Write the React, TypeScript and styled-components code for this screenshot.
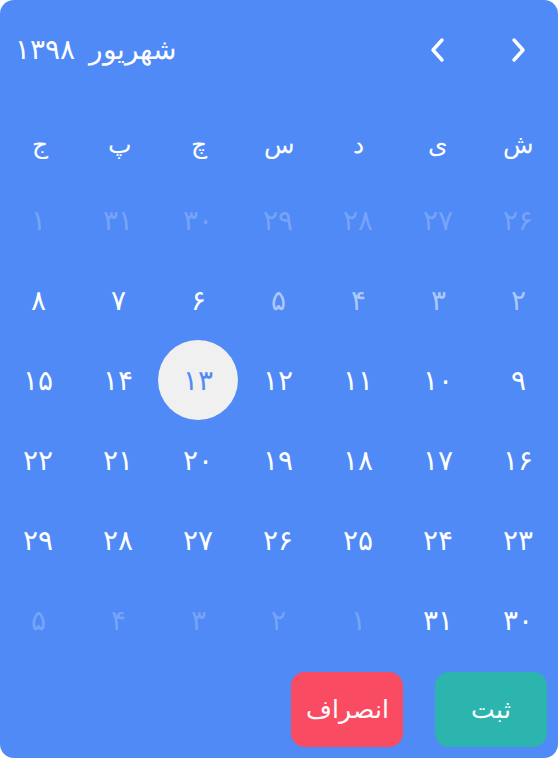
import React from "react";
import styled, { createGlobalStyle } from "styled-components";

const Global = createGlobalStyle`
  html, body { margin: 0; padding: 0; background: #ffffff; }
  body { font-family: "DejaVu Sans", sans-serif; }
`;

const Card = styled.div`
  box-sizing: border-box;
  width: 558px;
  height: 758px;
  background: #508af7;
  border-radius: 14px;
  direction: rtl;
  display: flex;
  flex-direction: column;
  color: #ffffff;
  font-family: "DejaVu Sans", sans-serif;
  overflow: hidden;
`;

const Header = styled.div`
  height: 100px;
  display: flex;
  align-items: center;
`;

const NavButton = styled.button`
  width: 80px;
  height: 60px;
  border: 0;
  background: transparent;
  display: flex;
  align-items: center;
  justify-content: center;
  padding: 0;
  cursor: pointer;
`;

const Title = styled.div`
  margin-right: auto;
  padding-left: 15px;
  display: flex;
  gap: 14px;
  font-size: 28px;
  font-weight: 300;
  line-height: 1;
  white-space: nowrap;
`;

const Grid = styled.div`
  display: grid;
  grid-template-columns: repeat(7, 1fr);
`;

const WeekDay = styled.div`
  height: 80px;
  padding-top: 8px;
  box-sizing: border-box;
  display: flex;
  align-items: center;
  justify-content: center;
  font-size: 25px;
  font-weight: 300;
`;

const Cell = styled.div`
  height: 80px;
  display: flex;
  align-items: center;
  justify-content: center;
`;

const Day = styled.div<{ $tone: "faint" | "dim" | "normal"; $selected?: boolean }>`
  width: 80px;
  height: 80px;
  border-radius: 50%;
  display: flex;
  align-items: center;
  justify-content: center;
  font-size: 28px;
  font-weight: 300;
  background: ${(p) => (p.$selected ? "#f0f0f0" : "transparent")};
  color: ${(p) =>
    p.$selected
      ? "#508af7"
      : p.$tone === "faint"
      ? "rgba(255,255,255,0.24)"
      : p.$tone === "dim"
      ? "rgba(255,255,255,0.55)"
      : "#ffffff"};
`;

const Footer = styled.div`
  flex: 1;
  display: flex;
  align-items: flex-start;
  gap: 32px;
  padding: 12px 11px 0 0;
`;

const ActionButton = styled.button<{ $variant: "ok" | "cancel" }>`
  width: 112px;
  height: 75px;
  border: 0;
  border-radius: 14px;
  color: #ffffff;
  font-family: "DejaVu Sans", sans-serif;
  font-size: 25px;
  font-weight: 300;
  background: ${(p) => (p.$variant === "ok" ? "#2cb5ae" : "#f94c63")};
  cursor: pointer;
`;

const fa = (n: number) =>
  String(n).replace(/\d/g, (d) => "۰۱۲۳۴۵۶۷۸۹"[Number(d)]);

const Chevron = ({ dir }: { dir: "left" | "right" }) => (
  <svg width="18" height="26" viewBox="0 0 18 26" fill="none">
    <path
      d={dir === "left" ? "M13 3 L4 13 L13 23" : "M5 3 L14 13 L5 23"}
      stroke="#ffffff"
      strokeWidth="3.4"
      strokeLinecap="round"
      strokeLinejoin="round"
    />
  </svg>
);

type D = { n: number; tone: "faint" | "dim" | "normal"; selected?: boolean };

const weekDays = ["ش", "ی", "د", "س", "چ", "پ", "ج"];

const days: D[] = [
  ...[26, 27, 28, 29, 30, 31, 1].map((n) => ({ n, tone: "faint" as const })),
  ...[2, 3, 4, 5].map((n) => ({ n, tone: "dim" as const })),
  ...Array.from({ length: 26 }, (_, i) => ({
    n: i + 6,
    tone: "normal" as const,
    selected: i + 6 === 13,
  })),
  ...[1, 2, 3, 4, 5].map((n) => ({ n, tone: "faint" as const })),
];

export default function App() {
  return (
    <>
      <Global />
      <Card>
        <Header>
          <NavButton aria-label="ماه قبل">
            <Chevron dir="right" />
          </NavButton>
          <NavButton aria-label="ماه بعد">
            <Chevron dir="left" />
          </NavButton>
          <Title>
            <span>شهریور</span>
            <span>{fa(1398)}</span>
          </Title>
        </Header>
        <Grid>
          {weekDays.map((w) => (
            <WeekDay key={w}>{w}</WeekDay>
          ))}
        </Grid>
        <Grid>
          {days.map((d, i) => (
            <Cell key={i}>
              <Day $tone={d.tone} $selected={d.selected}>
                {fa(d.n)}
              </Day>
            </Cell>
          ))}
        </Grid>
        <Footer>
          <ActionButton $variant="ok">ثبت</ActionButton>
          <ActionButton $variant="cancel">انصراف</ActionButton>
        </Footer>
      </Card>
    </>
  );
}
